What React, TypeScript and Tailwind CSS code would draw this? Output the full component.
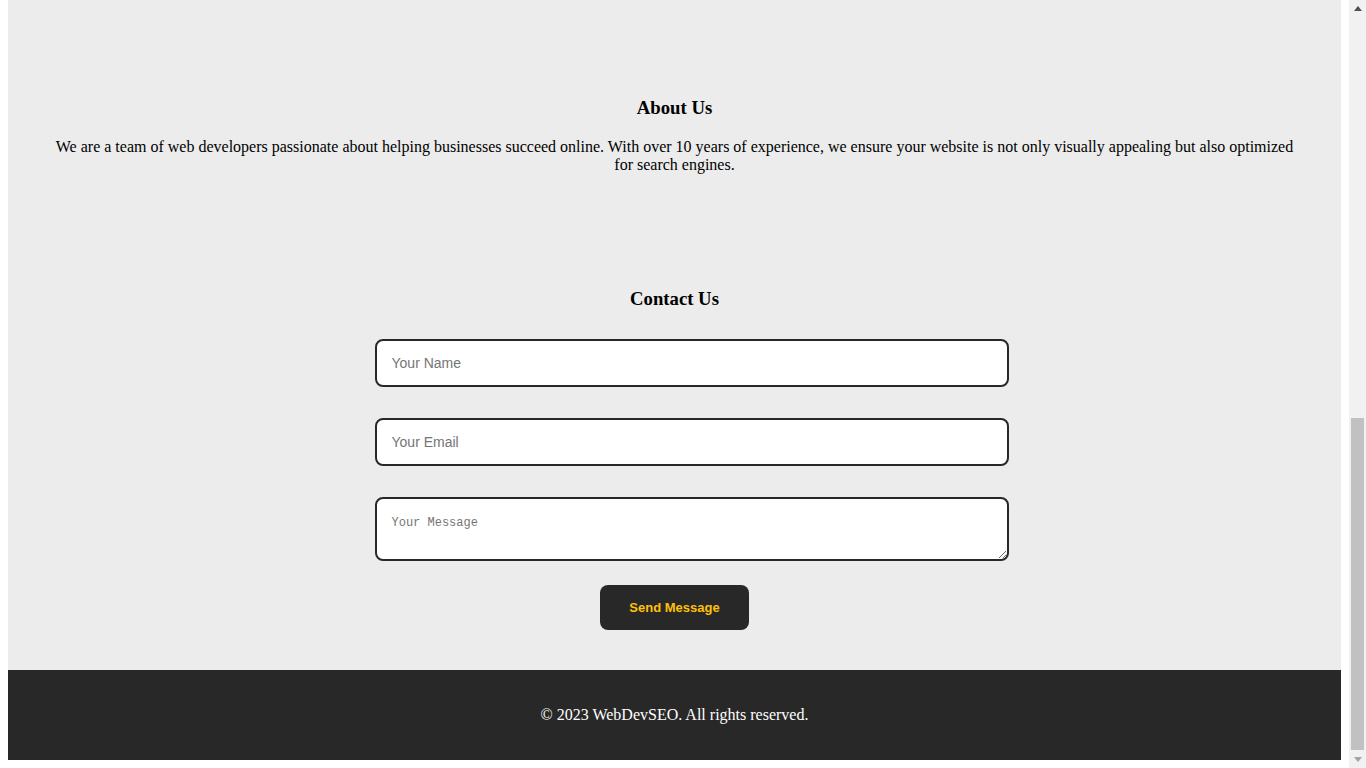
import React from "react";

// Pagina institucional (trecho final): Sobre, Contato e rodapé.
// A barra à direita reproduz a rolagem do navegador no fim da página.
function BarraRolagem() {
  return (
    <aside className="flex w-[17px] flex-none flex-col bg-[#f1f1f1]">
      <div className="flex h-[17px] items-center justify-center">
        <svg width="8" height="5" viewBox="0 0 8 5">
          <path d="M4 0 L8 5 L0 5 Z" fill="#505050" />
        </svg>
      </div>
      <div className="flex flex-1 flex-col justify-end px-[2px] pb-[1px]">
        <div className="h-[332px] bg-[#c1c1c1]" />
      </div>
      <div className="flex h-[17px] items-center justify-center">
        <svg width="8" height="5" viewBox="0 0 8 5">
          <path d="M0 0 L8 0 L4 5 Z" fill="#a3a3a3" />
        </svg>
      </div>
    </aside>
  );
}

export default function App() {
  const campo =
    "box-border w-[634px] rounded-lg border-2 border-[#282828] bg-white px-[15px] text-[#111] outline-none placeholder:text-[#757575]";

  return (
    <div className="flex h-[768px] overflow-hidden bg-white font-['Liberation_Serif',serif] text-black">
      <div className="flex min-w-0 flex-1 flex-col px-2 pb-2">
        <main className="flex h-[670px] flex-none flex-col bg-[#ececec] pt-[38px]">
          <section className="px-10 py-10 text-center">
            <h3 className="mb-[19px] mt-[19px] text-[18.72px] font-bold leading-[22px]">
              About Us
            </h3>
            <p className="mb-4 text-base leading-[18px]">
              We are a team of web developers passionate about helping
              businesses succeed online. With over 10 years of experience, we
              ensure your website is not only visually appealing but also
              optimized for search engines.
            </p>
          </section>

          <section className="px-10 pb-10 pt-10 text-center">
            <h3 className="mb-[29px] mt-[18px] text-[18.72px] font-bold leading-[22px]">
              Contact Us
            </h3>
            <form
              className="mx-auto flex w-[600px] flex-col items-start"
              onSubmit={(e) => e.preventDefault()}
            >
              <input
                type="text"
                placeholder="Your Name"
                className={`${campo} h-[48px] font-['Liberation_Sans',Arial,sans-serif] text-[14px]`}
              />
              <input
                type="email"
                placeholder="Your Email"
                className={`${campo} mt-[31px] h-[48px] font-['Liberation_Sans',Arial,sans-serif] text-[14px]`}
              />
              <textarea
                placeholder="Your Message"
                className={`${campo} mt-[31px] block h-[64px] pb-[13px] pt-[17px] font-['Liberation_Mono',monospace] text-[12px] leading-[15px]`}
              />
              <button
                type="submit"
                className="mt-6 h-[45px] self-center rounded-lg bg-[#282828] px-[29px] font-['Liberation_Sans',Arial,sans-serif] text-[13px] font-bold text-[#ffc107]"
              >
                Send Message
              </button>
            </form>
          </section>
        </main>

        <footer className="flex h-[90px] flex-none items-center justify-center bg-[#282828] text-base text-white">
          <p>© 2023 WebDevSEO. All rights reserved.</p>
        </footer>
      </div>
      <BarraRolagem />
    </div>
  );
}
